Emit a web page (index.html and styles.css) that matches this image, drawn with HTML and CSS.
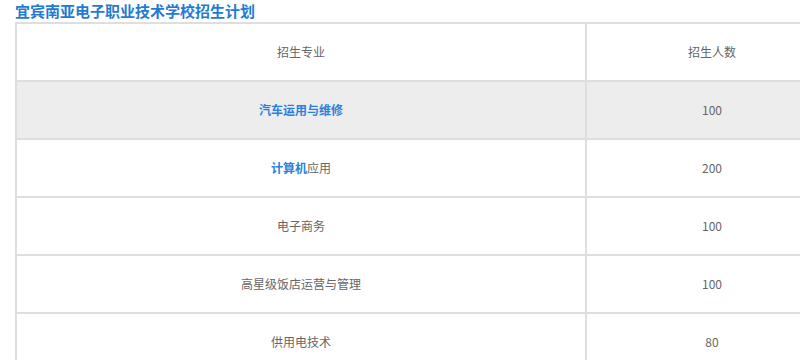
FILE: index.html
```html
<!DOCTYPE html>
<html lang="zh-CN">
<head>
<meta charset="utf-8">
<title>招生计划</title>
<link rel="stylesheet" href="styles.css">
</head>
<body>
<div class="page">
  <h2 class="title">宜宾南亚电子职业技术学校招生计划</h2>
  <div class="table-wrap">
    <table class="plan">
      <colgroup><col class="c1"><col class="c2"></colgroup>
      <tr><th>招生专业</th><th>招生人数</th></tr>
      <tr class="alt"><td><a class="lnk">汽车运用与维修</a></td><td>100</td></tr>
      <tr><td><a class="lnk">计算机</a>应用</td><td>200</td></tr>
      <tr><td>电子商务</td><td>100</td></tr>
      <tr><td>高星级饭店运营与管理</td><td>100</td></tr>
      <tr><td>供用电技术</td><td>80</td></tr>
    </table>
  </div>
</div>
</body>
</html>
```
FILE: styles.css
```css
html, body {
  margin: 0;
  padding: 0;
  background: #fff;
  overflow: hidden;
}
body {
  font-family: "Noto Sans CJK SC", "Microsoft YaHei", sans-serif;
  color: #666;
}
.page {
  padding: 0 0 0 15px;
  height: 360px;
  overflow: hidden;
}
.title {
  margin: 0;
  font-size: 15px;
  line-height: 22px;
  font-weight: bold;
  color: #1f7bd3;
  letter-spacing: 0;
}
.table-wrap {
  width: 785px;
  overflow: hidden;
}
.plan {
  width: 824px;
  border-collapse: collapse;
  table-layout: fixed;
  border: 2px solid #dedede;
}
.c1 { width: 570px; }
.plan th, .plan td {
  border: 2px solid #dedede;
  height: 56px;
  padding: 0;
  text-align: center;
  vertical-align: middle;
  font-size: 12px;
  font-weight: normal;
  color: #666;
  line-height: 16px;
}
.plan tr.alt td {
  background: #ededed;
}
.lnk {
  color: #2b80de;
  font-weight: bold;
  text-decoration: none;
}
```
